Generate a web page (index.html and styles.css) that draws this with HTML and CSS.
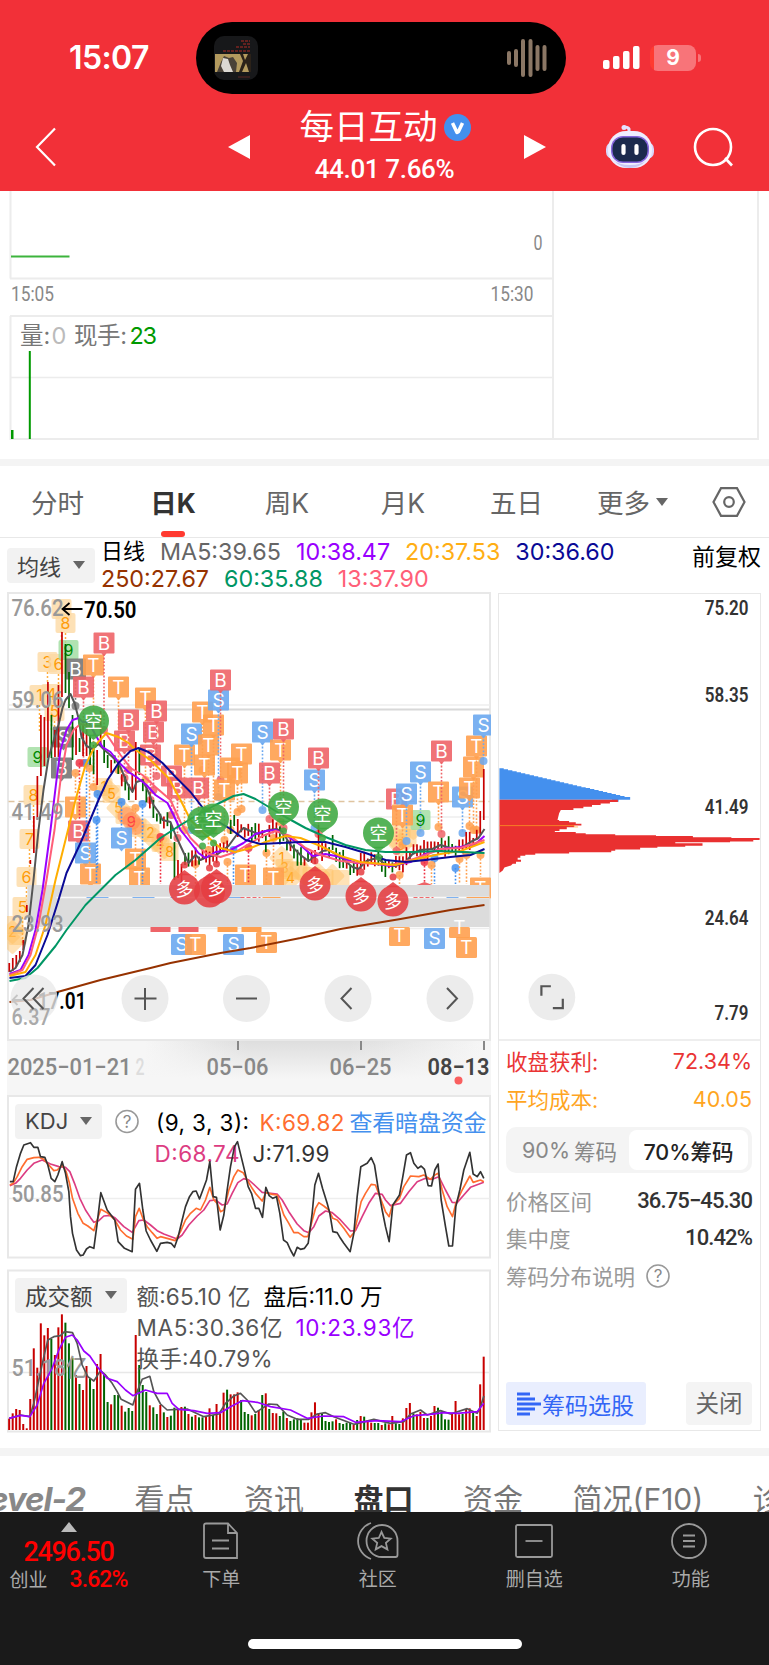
FILE: index.html
```html
<!DOCTYPE html>
<html lang="zh-CN">
<head>
<meta charset="utf-8">
<title>每日互动 44.01</title>
<link rel="stylesheet" href="styles.css">
</head>
<body>
<header class="top">
  <div class="status">
    <div class="clock">15:07</div>
    <div class="island">
      <svg class="art" width="44" height="44" viewBox="0 0 44 44"><rect width="44" height="44" rx="10" fill="#17181a"/><rect x="1" y="18" width="36" height="18" fill="#b39a5e"/><path d="M3 36l4-10 3-6 5 2 4-1 4 6-1 9z" fill="#4a4238"/><path d="M9 22l5 1 2 6 3 7h-9l-3-6z" fill="#ddd9d3"/><path d="M26 18l3 7-4 11h3l4-9 3 9h2V18h-3l-3 6-2-6z" fill="#2b2219"/><path d="M27 5h9M29 8h7M22 11h14M9 15h27" stroke="#7e2422" stroke-width="1.6" stroke-dasharray="3 1"/><path d="M24 41h12" stroke="#5a2422"/></svg>
      <svg class="wave" width="42" height="40" viewBox="0 0 42 40" stroke="#8b7765" stroke-width="4" stroke-linecap="round"><path d="M3 15v10M10 13v14M17 3v34M24.500 3v34M31.500 9v22M38.500 9v22"/></svg>
    </div>
    <svg class="signal" width="37" height="24" viewBox="0 0 37 24" fill="#fff"><rect y="14" width="6.500" height="9" rx="2"/><rect x="10" y="10" width="6.500" height="13" rx="2"/><rect x="20" y="5" width="6.500" height="18" rx="2"/><rect x="30" width="6.500" height="23" rx="2"/></svg>
    <div class="battery"><span>9</span></div>
  </div>
  <div class="nav">
    <svg width="22" height="40" viewBox="0 0 22 40" fill="none" stroke="#fff" stroke-width="2.200"><path d="M20 1.500L2 20l18 18.500"/></svg>
    <svg class="prev" width="22" height="24" viewBox="0 0 22 24"><path d="M22 0v24L0 12z" fill="#fff"/></svg>
    <div class="title">
      <div class="name">每日互动<svg width="27" height="27" viewBox="0 0 27 27"><circle cx="13.500" cy="13.500" r="13.500" fill="#4490ee"/><path d="M8.500 9l4.500 9.500 1.500-1L18.500 9" fill="none" stroke="#fff" stroke-width="3.500" stroke-linejoin="round"/></svg></div>
      <div class="quote">44.01 7.66%</div>
    </div>
    <svg class="next" width="22" height="24" viewBox="0 0 22 24"><path d="M0 0v24l22-12z" fill="#fff"/></svg>
    <svg class="robot" width="48" height="44" viewBox="0 0 48 44"><path d="M23 8V4q-1-2-5-2" fill="none" stroke="#e5e2ff" stroke-width="3"/><circle cx="18" cy="2.500" r="2.500" fill="#e5e2ff"/><rect x="0" y="17" width="48" height="17" rx="7" fill="#d9d7fb"/><rect x="2" y="6" width="44" height="37" rx="18" fill="#efedff"/><path d="M7 35q8 8 17 8t17-8q-6 5-17 5T7 35" fill="#c9c7f1"/><rect x="5" y="11" width="38" height="27" rx="12" fill="#8565dc"/><rect x="6.500" y="12.500" width="35" height="24" rx="10.500" fill="#1b2a4d"/><path d="M17.500 21v7M30.500 21v7" stroke="#fff" stroke-width="4.200" stroke-linecap="round"/></svg>
    <svg class="search" width="42" height="42" viewBox="0 0 42 42" fill="none" stroke="#fff" stroke-width="2.600"><circle cx="20" cy="20" r="18"/><path d="M32 31l7 7.500"/></svg>
  </div>
</header>

<section class="after-hours">
  <svg width="769" height="268" viewBox="0 191 769 268">
    <g stroke="#ececec" stroke-width="2" fill="none"><path d="M10.500 191v87.500M553 191v248M758 191v248M10 278.500h543M10.500 316v123H759M10 316h543"/><path d="M11 377.500h542" stroke-width="1.500"/></g>
    <g fill="#090"><rect x="11" y="255.500" width="58.500" height="2" fill="#3cb43c"/><rect x="28.800" y="351" width="2" height="88"/><rect x="11" y="430" width="2.500" height="9"/></g>
    <g class="din" fill="#888" font-size="20"><text x="533.500" y="250" textLength="9">0</text><text x="11" y="300.500" textLength="43">15:05</text><text x="490.500" y="300.500" textLength="43">15:30</text></g>
    <g class="sf" font-size="23.500" fill="#777"><text x="20" y="343.500">量:</text><text x="51.500" y="343.500" fill="#bbb">0</text><text x="74" y="343.500" textLength="53">现手:</text><text x="129.500" y="343.500" fill="#090" textLength="27.500">23</text></g>
  </svg>
</section>

<nav class="periods">
  <span>分时</span><span class="on">日K</span><span>周K</span><span>月K</span><span>五日</span><span>更多<i class="tri"></i></span>
  <svg width="34" height="30" viewBox="0 0 34 30" fill="none" stroke="#666" stroke-width="2.200"><path d="M9 1.200h16L32.500 15 25 28.800H9L1.500 15z"/><circle cx="17" cy="15" r="4.800"/></svg>
</nav>

<section class="legend">
  <div class="btn">均线<i class="tri"></i></div>
  <div class="rows">
    <div><b>日线</b><span class="c5">MA5:39.65</span><span class="c10">10:38.47</span><span class="c20">20:37.53</span><span class="c30">30:36.60</span></div>
    <div><span class="c250">250:27.67</span><span class="c60">60:35.88</span><span class="c13">13:37.90</span></div>
  </div>
  <div class="adj">前复权</div>
</section>

<main class="board">
  <div class="charts">
    <div class="kline">
      <svg id="kline" width="484" height="450" viewBox="6.500 592 484 450">
        <rect x="7.500" y="593" width="482" height="447" fill="#fff" stroke="#e8e8e8" stroke-width="2"/>
        <g stroke="#eee" stroke-width="1.500"><path d="M8 705h481M8 817h481M8 928.500h481"/></g>
        <path d="M8 709.500h481" stroke="#d8d8d8" stroke-width="2"/>
        <path d="M8 801.500h481" stroke="#dfc49f" stroke-width="1.500" stroke-dasharray="6 4"/>
        <g id="glow"></g>
        <g id="marks"></g>
        <rect x="27" y="885" width="462" height="42" fill="#dcdcdc"/>
        <path d="M56 897.500h433" stroke="#fafafa" stroke-width="1.600"/>
        <path d="M86 897.500h22M132 897.500h22M170 897.500h3M228 897.500h14M446 897.500h12" stroke="#7fb2f0" stroke-width="1.200"/>
        <path d="M240 897.500h20M413 897.500h20" stroke="#f06a6c" stroke-width="1.200" stroke-dasharray="4 2"/>
        <path d="M262 897.500h18M466 897.500h23" stroke="#ffa557" stroke-width="1.200"/>
        <g id="low"></g>
        <g id="candles"></g>
        <g id="averages"></g>
        <g id="flags"></g>
        <g class="din axis"><text x="11" y="615.500" textLength="52">76.62</text><text x="11" y="708" textLength="52">59.06</text><text x="11" y="820" textLength="52">41.49</text><text x="11" y="932" textLength="52">23.93</text></g>
        <path d="M82 609H62m7-6l-7 6 7 6" fill="none" stroke="#000" stroke-width="1.800"/>
        <text class="din peak" x="83.500" y="617.500" textLength="52.500">70.50</text>
        <path d="M28 1000H12m5-5l-5 5 5 5" fill="none" stroke="#333" stroke-width="1.800"/>
        <text class="din peak" x="37" y="1008.500" textLength="49">17.01</text>
        <g><circle cx="33.500" cy="998" r="23.500" fill="#eaeaea" fill-opacity=".8"/><circle cx="144.500" cy="998.500" r="23.500" fill="#ececec"/><circle cx="246" cy="998.500" r="23.500" fill="#ececec"/><circle cx="347.500" cy="998.500" r="23.500" fill="#ececec"/><circle cx="449.500" cy="998.500" r="23.500" fill="#ececec"/></g>
        <text class="din axis faint" x="11" y="1024.500" textLength="39">6.37</text>
        <g fill="none" stroke="#555" stroke-width="2"><path d="M33 988l-10 10.500 10 10.500M43 988l-10 10.500 10 10.500M134 998.500h22M144.500 988v22M235.500 998.500h21M351 988l-10 10.500 10 10.500M446.500 988l10 10.500-10 10.500"/></g>
      </svg>
    </div>
    <div class="dates">
      <svg width="484" height="54" viewBox="6.500 1042 484 54">
        <defs><linearGradient id="fade" x1="0" x2="1"><stop offset="0" stop-color="#dedede" stop-opacity="0"/><stop offset=".3" stop-color="#dedede"/><stop offset=".6" stop-color="#dedede"/><stop offset="1" stop-color="#dedede" stop-opacity="0"/></linearGradient><linearGradient id="down" x1="0" x2="0" y1="0" y2="1"><stop offset="0" stop-color="#f6f6f6" stop-opacity="0"/><stop offset=".7" stop-color="#f6f6f6"/></linearGradient></defs>
        <rect x="145" y="1042" width="340" height="54" fill="url(#fade)"/><rect x="145" y="1042" width="346" height="54" fill="url(#down)"/>
        <path d="M237.500 1042v9M360.500 1042v9M483.500 1042v9" stroke="#888" stroke-width="2"/>
        <g class="din date"><text x="7" y="1076" textLength="124">2025−01−21</text><text x="135" y="1076" textLength="9" class="ghost">2</text><text x="206" y="1076" textLength="62">05−06</text><text x="329" y="1076" textLength="62">06−25</text><text class="now" x="427" y="1076" textLength="62">08−13</text></g>
        <circle cx="458" cy="1081.500" r="4" fill="#f95f5f"/>
      </svg>
    </div>
    <div class="panel">
      <svg id="kdj" width="484" height="164" viewBox="6.500 1095 484 164"><rect x="7.500" y="1096" width="482" height="161.500" fill="#fff" stroke="#e8e8e8" stroke-width="2"/><path d="M8 1198.500h481" stroke="#eee" stroke-width="1.500"/><text class="din axis" x="11" y="1202" textLength="52">50.85</text>
        <g class="sf" font-size="22.500"><text x="155.500" y="1131" fill="#000" textLength="93">(9, 3, 3):</text><text x="259" y="1131" fill="#ff6d2f" textLength="85">K:69.82</text><text x="349" y="1131" fill="#4490ee" font-size="23" textLength="137">查看暗盘资金</text><text x="154" y="1162" fill="#dc3c82" textLength="85">D:68.74</text><text x="252" y="1162" fill="#333" textLength="77">J:71.99</text></g>
        <circle cx="126.500" cy="1121.500" r="11" fill="none" stroke="#999" stroke-width="1.600"/><text class="sf" x="126.500" y="1128" text-anchor="middle" font-size="17" fill="#888">?</text>
        <g id="kdj-lines" transform="translate(0 1030) scale(.33333)"></g></svg>
      <div class="btn pick">KDJ<i class="tri"></i></div>
    </div>
    <div class="panel">
      <svg id="vol" width="484" height="164" viewBox="6.500 1269 484 164"><rect x="7.500" y="1270.500" width="482" height="161" fill="#fff" stroke="#e8e8e8" stroke-width="2"/><path d="M8 1372.500h481" stroke="#e8e8e8" stroke-width="1.500"/>
        <g id="bars" transform="translate(0 1260) scale(.33333)"></g>
        <text class="din axis" x="11" y="1376" textLength="76">51.18亿</text>
        <g class="sf" font-size="22.500" fill="#555"><text x="136" y="1304.500" textLength="114">额:65.10 亿</text><text x="263" y="1304.500" fill="#000" textLength="119">盘后:11.0 万</text><text x="136" y="1336" textLength="146">MA5:30.36亿</text><text x="295" y="1336" fill="#90f" textLength="119">10:23.93亿</text><text x="136" y="1367" textLength="136">换手:40.79%</text></g>
        <g id="vol-lines" transform="translate(0 1260) scale(.33333)"></g></svg>
      <div class="btn pick wide">成交额<i class="tri"></i></div>
    </div>
  </div>

  <aside class="chips">
    <svg width="261" height="448" viewBox="498.500 593 261 448">
      <g class="din price"><text x="704.500" y="615" textLength="44">75.20</text><text x="704.500" y="702" textLength="44">58.35</text><text x="704.500" y="814.500" textLength="44">41.49</text><text x="704.500" y="926.500" textLength="44">24.64</text><text x="714.500" y="1021.500" textLength="34">7.79</text></g>
      <g transform="translate(490 591) scale(.33333)"><path d="M25 534h13v3h13v3h13v3h13v3h13v3h13v3h13v3h13v3h13v3h13v3h13v3h13v3h13v3h13v3h13v3h13v3h13v3h13v3h13v3h13v3h13v3h13v3h13v3h13v3h13v3h13v3h13v3h13v3h13v3h17v8h-35v6h-20v-6H25z" fill="#4490ee"/><path d="M25 629h357v7h-24v4h-28v5h-26v5h-26v5h-30v5h-38l-5 10-5 20h5v3h30v4h20v4h17v6h-22v5h-22v6h-22v5h-14v3h63v4h30v3h89v3h123v2h111v4h116v2h85v6h-19v5h-70v2H555v3h82v8h-52v3h-84v3h-52v5h-75v4h-12v4H235v4H133v4H103v3H88v6h-8v6h10v6H75v6H65l-5 5-20 6-5 9-10 8z" fill="#e93030"/><path d="M25 707h225v4h12" stroke="#ffa51f" stroke-width="2.500" fill="none" stroke-opacity=".8"/></g>
      <circle cx="551" cy="999" r="23.500" fill="#ececec"/><path d="M540.500 997.500v-9.500H550M562 1000.500v9.500h-10" fill="none" stroke="#555" stroke-width="2.200"/>
    </svg>
    <div class="info">
      <div class="row red"><span>收盘获利:</span><span class="num">72.34%</span></div>
      <div class="row gold"><span>平均成本:</span><span class="num">40.05</span></div>
      <div class="seg"><span>90%<em>筹码</em></span><span class="on">70%筹码</span></div>
      <div class="row grey"><span>价格区间</span><b>36.75−45.30</b></div>
      <div class="row grey"><span>集中度</span><b>10.42%</b></div>
      <div class="row grey"><span class="help">筹码分布说明<svg width="24" height="24" viewBox="0 0 24 24"><circle cx="12" cy="12" r="11" fill="none" stroke="#999" stroke-width="1.600"/><text class="sf" x="12" y="18" text-anchor="middle" font-size="17" fill="#888">?</text></svg></span></div>
      <div class="actions">
        <div class="choose"><svg width="24" height="24" viewBox="0 0 24 24" fill="none" stroke="#3366f6" stroke-width="2.800"><path d="M0 2h13M0 7h18M0 12h24M0 17h18M0 22h13"/></svg>筹码选股</div>
        <div class="close">关闭</div>
      </div>
    </div>
  </aside>
</main>

<nav class="sections"><span class="lv">Level-2</span><span>看点</span><span>资讯</span><span class="on">盘口</span><span>资金</span><span>简况(F10)</span><span>诊股</span></nav>

<footer class="bar">
  <div class="index"><i class="up"></i><b>2496.50</b><div><span>创业</span><em>3.62%</em></div></div>
  <div class="item"><svg width="40" height="38" viewBox="0 0 40 38"><path d="M5 1.500h22l9 9.500V36H5q-2 0-2-2V3.500q0-2 2-2zM27 1.500V11h9M11 18.500h17M11 26.500h17"/></svg>下单</div>
  <div class="item"><svg width="42" height="38" viewBox="0 0 42 38"><path d="M25 3a15.500 16 0 1 0 0 32h13.500q2 0 2-2V19A15.500 16 0 0 0 25 3zM14 1a19 19 0 0 0 0 36"/><path d="M24.500 10l2.800 6 6.400.6-4.800 4.300 1.500 6.500-5.900-3.300-5.800 3.300 1.500-6.500-4.900-4.300 6.500-.6z"/></svg>社区</div>
  <div class="item"><svg width="40" height="38" viewBox="0 0 40 38"><rect x="2" y="3" width="36" height="32" rx="1.500"/><path d="M11.500 19h17"/></svg>删自选</div>
  <div class="item"><svg width="40" height="38" viewBox="0 0 40 38"><circle cx="18" cy="19" r="17"/><path d="M12 13.500h12M12 19h12M12 24.500h12"/></svg>功能</div>
  <div class="home"></div>
</footer>
<script src="charts.js"></script>
</body>
</html>
```
FILE: styles.css
```css
* { box-sizing: border-box; }
body { margin: 0; width: 769px; height: 1665px; overflow: hidden; background: #fff; font-family: Inter, "Noto Sans CJK SC", sans-serif; color: #666; }
svg { display: block; flex: none; }
i, em { font-style: normal; }
.din { font-family: Roboto, "Noto Sans CJK SC", sans-serif; }
.sf { font-family: Inter, "Noto Sans CJK SC", sans-serif; }

.top { height: 191px; background: #f23038; color: #fff; }
.status { height: 94px; padding-top: 22px; display: flex; align-items: center; }
.clock { width: 196px; padding-left: 69px; font-size: 32px; font-weight: 600; line-height: 36px; letter-spacing: -.6px; }
.island { width: 370px; height: 72px; border-radius: 36px; background: #000; display: flex; align-items: center; justify-content: space-between; padding: 0 18px; }
.signal { margin-left: 37px; }
.battery { position: relative; margin-left: 10px; width: 46px; height: 26px; border-radius: 8px; background: linear-gradient(90deg, #ff3b30 4px, #f87479 4px); font-size: 21px; font-weight: 700; line-height: 26px; text-align: center; }
.battery::after { content: ""; position: absolute; right: -5px; top: 9px; width: 3px; height: 8px; border-radius: 0 3px 3px 0; background: #f87479; }
.nav { height: 97px; display: flex; align-items: center; padding-left: 35px; }
.nav > svg { margin-top: 9px; }
.nav .prev { margin-left: 171px; }
.title { width: 274px; display: flex; flex-direction: column; align-items: center; }
.name { display: flex; align-items: center; gap: 6px; font-size: 34.500px; line-height: 44px; margin-top: 4px; padding-right: 4px; }
.quote { font: 500 26px/30px Roboto, sans-serif; letter-spacing: -.35px; margin: 5px 5px 0 0; }
.nav .robot { margin-left: 60px; margin-top: 8px; }
.nav .search { margin-left: 39px; margin-top: 10px; }

.after-hours { height: 275px; border-bottom: 7px solid #f4f4f4; }
.tri { display: inline-block; border: 6px solid transparent; border-top: 8px solid #666; border-bottom: 0; }
.periods { height: 72px; border-bottom: 1.500px solid #e8e8e8; display: grid; grid-template-columns: 115px 116px 112px 120px 107px 125px 68px; align-items: center; justify-items: center; font-size: 26.500px; }
.periods span { position: relative; display: flex; align-items: center; gap: 6px; height: 71px; }
.periods .on { color: #333; font-weight: 700; }
.periods .on::after { content: ""; position: absolute; left: 50%; bottom: 0; width: 24px; height: 6px; margin-left: -12px; border-radius: 3px; background: #ff3a30; }

.legend { height: 54px; display: flex; padding: 0 8px 0 7px; }
.btn { display: flex; align-items: center; gap: 12px; height: 35px; padding: 0 10px 2px; border-radius: 4px; background: #f2f2f2; color: #444; font-size: 22px; }
.legend .btn { width: 88px; margin-top: 10px; }
.rows { margin-left: 6px; font-size: 23.300px; line-height: 27px; flex: 1; }
.rows > div { display: flex; gap: 15px; }
.rows b { font-weight: 400; color: #000; font-size: 22px; }
.c5 { color: #666; } .c10 { color: #90f; } .c20 { color: #ffae14; } .c30 { color: #0a0a96; } .c250 { color: #963200; } .c60 { color: #009664; } .c13 { color: #ff5f78; }
.adj { color: #000; font-size: 23px; line-height: 39px; }

.board { display: flex; height: 856px; padding-left: 6.500px; gap: 7.500px; }
.charts { width: 484px; }
.kline { height: 449px; }
.dates { height: 54px; background: #f6f6f6; }
.panel { position: relative; height: 174px; }
.pick { position: absolute; left: 8.500px; top: 9px; }
.pick.wide { font-size: 22.500px; }
.axis { font-size: 24px; fill: #999; font-weight: 500; }
.faint { fill: #aaa; }
.peak { font-size: 24px; fill: #000; font-weight: 600; }
.date { font-size: 24px; fill: #888; font-weight: 500; }
.date .now { fill: #444; font-weight: 600; }
.date .ghost { fill: #ddd; }
.price { font-size: 20px; font-weight: 600; fill: #333; }
.mk { font: 400 19px Inter, "Noto Sans CJK SC", sans-serif; text-anchor: middle; fill: #fff; }

.chips { width: 263px; height: 838px; margin-top: 1px; border: 1.500px solid #e8e8e8; }
.chips > svg { margin-top: -1px; border-bottom: 2px solid #eee; }
.info { padding: 1px 8px 0 7px; font-size: 21.500px; }
.row { display: flex; justify-content: space-between; align-items: center; height: 37.700px; }
.num { font-size: 21.500px; }
.red { color: #ea3434; } .gold { color: #ffa51f; } .grey { color: #999; }
.row b { font: 500 22px Roboto, sans-serif; letter-spacing: -.9px; color: #333; }
.seg { display: flex; height: 46px; margin: 10px 0 8px; padding: 3px 4px; border-radius: 10px; background: #f4f4f4; color: #888; }
.seg span { flex: 1; display: flex; gap: 4px; align-items: center; justify-content: center; }
.seg .on { background: #fff; border-radius: 8px; color: #222; font-weight: 500; }
.help { display: flex; align-items: center; gap: 11px; }
.actions { margin-top: 88px; display: flex; justify-content: space-between; height: 43px; font-size: 23.500px; }
.choose { width: 140px; display: flex; align-items: center; padding-left: 11px; gap: 1px; background: #e9eefe; color: #3366f6; border-radius: 3px; font-size: 23px; }
.close { width: 66px; text-align: center; line-height: 43px; background: #f4f4f4; border-radius: 4px; }

.sections { height: 64px; border-top: 8px solid #f4f4f4; display: flex; gap: 49.500px; font-size: 30px; line-height: 44px; padding-top: 21px; overflow: hidden; white-space: nowrap; color: #777; }
.sections span { flex: none; }
.sections .on { color: #333; font-weight: 700; }
.sections .lv { font-size: 33px; font-style: italic; font-weight: 700; letter-spacing: -1px; color: #888; margin-left: -37px; width: 122px; text-align: right; }

.bar { position: relative; height: 153px; background: #1a1a1a; display: grid; grid-template-columns: 143px repeat(4, 156.500px); color: #aaa; font-size: 19px; }
.item { display: flex; flex-direction: column; align-items: center; padding-top: 10px; line-height: 28px; gap: 6px; }
.item svg { fill: none; stroke: #999; stroke-width: 1.800; }
.index { display: flex; flex-direction: column; align-items: center; padding: 10px 6px 0 0; color: red; }
.up { border: 8.500px solid transparent; border-bottom: 10px solid #bbb; border-top: 0; }
.index b { font: 500 27px/32px Roboto, sans-serif; letter-spacing: -1.400px; margin-top: 4px; }
.index div { display: flex; gap: 22px; line-height: 26px; }
.index span { color: #aaa; }
.index em { font: 500 23px/26px Roboto, sans-serif; letter-spacing: -.9px; margin-top: -1px; }
.home { position: absolute; left: 248px; top: 127px; width: 274px; height: 10px; border-radius: 5px; background: #fff; }
```
FILE: charts.js
```js
const NS = 'http://www.w3.org/2000/svg';
const $ = id => document.getElementById(id);
function add(parent, tag, attrs, text) {
  const e = document.createElementNS(NS, tag);
  for (const k in attrs) e.setAttribute(k, attrs[k]);
  if (text !== undefined) e.textContent = text;
  parent.appendChild(e);
  return e;
}
// Numeric labels are condensed to their slot width
document.querySelectorAll('.din text, text.din').forEach(t => t.setAttribute('lengthAdjust', 'spacingAndGlyphs'));

const RED = '#c80000', GREEN = '#006400';
const ORANGE = '#ffa04f', COLORS = { B: '#ee6468', S: '#6ba8f0', T: ORANGE };

function line(parent, pts, color, width) {
  add(parent, 'polyline', { points: pts, fill: 'none', stroke: color, 'stroke-width': width, 'stroke-linejoin': 'round' });
}

const averages = [
  ['#555555', '9,972 15,968 22,955 28,925 33,880 38,830 43,790 48,758 53,741 58,725 62,708 65,700 70,694 74,703 78,718 81,737 86,746 92,749 98,744 104,750 112,757 118,763 122,772 126,782 132,792 136,782 142,780 148,792 153,805 158,812 162,820 170,822 175,835 180,846 188,863 195,855 200,860 206,857 216,855 228,846 236,835 243,828 250,831 258,834 268,830 276,829 282,832 290,845 300,855 308,861 315,856 322,851 328,850 333,853 340,857 352,867 358,869 366,861 376,858 386,865 395,866 405,862 412,854 420,850 432,849 440,845 450,848 460,848 470,842 478,838 484,829'],
  ['#9900ff', '9,974 20,970 28,955 35,930 42,890 50,830 56,780 60,750 66,730 72,720 78,718 82,722 88,722 95,735 102,747 110,752 118,762 128,772 136,777 146,785 155,795 167,803 173,815 180,830 188,840 198,853 205,858 215,852 230,850 243,843 255,834 265,831 275,830 285,835 300,845 312,856 325,854 340,857 355,863 370,863 390,866 410,862 425,854 440,849 460,847 475,844 484,836'],
  ['#ff5f78', '9,975 22,970 30,955 38,925 46,880 54,830 60,780 66,745 73,730 80,724 88,726 100,726 110,740 120,755 130,768 142,775 155,787 170,800 180,822 190,838 205,853 220,857 235,852 250,843 262,836 275,831 290,836 305,848 320,855 340,861 360,863 390,865 410,860 425,855 440,849 460,848 484,840'],
  ['#ffae00', '9,976 25,972 35,955 45,925 55,880 65,840 75,800 85,765 95,745 106,733 118,737 128,743 135,750 150,760 160,770 168,778 180,800 190,820 205,835 220,848 235,852 250,848 265,842 285,836 300,838 320,846 340,856 360,862 395,865 420,858 440,854 460,851 484,842'],
  ['#0a0a96', '9,978 25,976 35,965 47,935 58,900 66,873 80,843 98,800 107,780 118,763 130,751 138,748 148,752 162,763 175,777 190,792 204,810 215,820 230,829 245,840 260,844 280,843 300,842 325,842 345,847 365,853 385,860 405,862 425,860 450,857 470,855 484,849'],
  ['#009664', '9,981 25,978 37,968 55,946 66,930 85,905 100,890 115,875 135,860 160,838 180,825 197,815 215,805 233,796 243,794 255,799 270,808 285,817 305,828 325,837 345,845 365,850 385,852 410,852 440,851 484,853'],
  ['#963200', '9,1002 30,1000 57,992 100,980 150,968 170,963 220,953 250,948 300,938 340,929 400,919 450,910 484,905']
];
averages.forEach(([c, p]) => line($('averages'), p, c, 2));

// Candles: index -> [high y, low y, colour]
const fixed = {
  0: [963, 972, 1], 1: [958, 971, 1], 2: [955, 967, 1], 3: [951, 962, 1], 4: [940, 950, 1], 5: [905, 912, 1], 6: [860, 864, 1],
  7: [816, 853, 1], 8: [776, 820, 1], 9: [715, 776, 1], 10: [717, 766, 1], 11: [682, 758, 1], 12: [715, 758, 0], 13: [730, 757, 1],
  14: [685, 757, 1], 15: [632, 697, 1], 16: [644, 693, 0], 17: [672, 708, 0], 18: [715, 760, 0], 19: [727, 755, 1], 20: [738, 752, 0],
  21: [724, 756, 1], 22: [722, 756, 1], 23: [735, 765, 0], 24: [745, 774, 0], 25: [750, 785, 1], 26: [711, 746, 1], 27: [740, 763, 0],
  28: [755, 768, 0], 29: [760, 773, 1], 36: [742, 800, 1], 37: [748, 775, 0], 47: [842, 880, 0], 48: [860, 878, 1], 49: [864, 885, 1],
  63: [820, 834, 0], 64: [815, 826, 0], 73: [835, 852, 0], 88: [825, 850, 1], 92: [835, 850, 0], 134: [811, 835, 1], 135: [769, 820, 1]
};
const ma5 = averages[0][1].split(' ').map(p => p.split(',').map(Number));
function yAt(x) {
  for (let i = 1; i < ma5.length; i++) {
    const [x0, y0] = ma5[i - 1], [x1, y1] = ma5[i];
    if (x <= x1) return y0 + (y1 - y0) * (x - x0) / (x1 - x0);
  }
  return ma5[ma5.length - 1][1];
}
for (let i = 0; i < 136; i++) {
  const x = 8.7 + i * 3.515;
  let c = fixed[i];
  if (!c) {
    const slope = yAt(x + 4) - yAt(x - 4);
    const mid = yAt(x + 3) + ((i * 7) % 5 - 2) * 1.4, h = 4 + (i * 13) % 6;
    c = [mid - h, mid + h, slope < 0 || i % 4 === 0 ? 1 : 0];
  }
  add($('candles'), 'rect', { x: x - .8, y: c[0], width: 1.7, height: c[1] - c[0], fill: c[2] ? RED : GREEN });
}

function dot(g, x, y, color, r = 4) { add(g, 'circle', { cx: x, cy: y, r, fill: color, 'fill-opacity': .85 }); }
function mark(g, letter, x, y, stem, color) {
  color = color || COLORS[letter];
  if (stem) {
    add(g, 'path', { d: `M${x} ${y + 11}V${stem}`, stroke: color, 'stroke-width': 1.6, 'stroke-dasharray': '1.8 1.8' });
    dot(g, x, stem, color);
  }
  add(g, 'path', { d: `M${x - 9.5} ${y - 10.5}h19q1 0 1 1v19q0 1-1 1h-7l-2.500 3-2.500-3h-7q-1 0-1-1v-19q0-1 1-1z`, fill: color, 'fill-opacity': .9 });
  add(g, 'text', { x, y: y + 7, class: 'mk' }, letter);
}
function num(g, n, x, y, fill = '#fdd9a4', ink = '#ff9c0a') {
  add(g, 'rect', { x: x - 10, y: y - 10, width: 20, height: 20, rx: 2, fill, 'fill-opacity': .8 });
  if (n) add(g, 'text', { x, y: y + 6, class: 'mk', style: `fill:${ink};font-size:16px` }, n);
}
const glow = $('glow'), marks = $('marks');
[[14, 925, ''], [12, 932, '2'], [17, 936, ''], [12, 942, ''], [103, 787, '1'], [107, 790, ''], [111, 794, '5'], [118, 808, '5'], [124, 815, ''], [131, 821, ''], [137, 828, ''], [144, 830, ''], [150, 833, '2'], [155, 840, ''], [160, 843, '4'], [164, 847, ''], [169, 852, '8'],
 [281, 858, '1'], [284, 868, '3'], [281, 876, ''], [290, 870, ''], [290, 878, '4'], [298, 871, ''], [304, 874, ''], [311, 876, ''], [318, 875, ''], [324, 878, ''], [332, 876, ''], [340, 879, ''], [395, 838, ''], [401, 832, ''], [400, 845, '3'], [407, 838, ''], [413, 828, '']
].forEach(([x, y, n], i) => {
  add(glow, 'rect', { x: x - 9, y: y - 9, width: 18, height: 18, rx: 2, fill: '#ffbf60', 'fill-opacity': .45, transform: i % 2 ? `rotate(45 ${x} ${y})` : '' });
  if (n) add(glow, 'text', { x, y: y + 5, class: 'mk', style: 'fill:#ff9c0a;font-size:14px' }, n);
});
[['', 61, 609], ['8', 65, 623], ['3', 47, 662], ['6', 58, 664], ['1', 39, 695], ['4', 51, 694], ['5', 54, 711], ['8', 33, 795], ['7', 29, 839], ['6', 26, 877], ['5', 22, 907]].forEach(([n, x, y]) => {
  add(glow, 'path', { d: `M${x} ${y + 10}v26`, stroke: '#ffae40', 'stroke-width': 1.5, 'stroke-dasharray': '2 2' });
  num(marks, n, x, y);
});
num(marks, '9', 68, 650, '#9ddc9d', '#008a00');
num(marks, '9', 37, 757, '#9ddc9d', '#008a00');
num(marks, '9', 420, 820, '#9ddc9d', '#008a00');
[[131, 821], [126, 816], [135, 826]].forEach(([x, y]) => add(glow, 'circle', { cx: x, cy: y, r: 9, fill: '#ff8450', 'fill-opacity': .5 }));
add(marks, 'text', { x: 131, y: 827, class: 'mk', style: 'fill:#f44;font-size:15px' }, '9');
const GREY = '#777';
[
  ['B', 75, 669, 706, GREY], ['S', 63, 737, 0, GREY], ['B', 61, 768, 0, GREY],
  ['T', 93, 665, 787], ['B', 103.5, 643, 730], ['B', 83, 687, 763], ['T', 118, 687, 770], ['T', 145, 698, 780],
  ['B', 124, 741, 778], ['B', 128, 720, 770], ['B', 150, 755, 800], ['B', 153, 732, 790], ['B', 156, 711, 776],
  ['T', 184, 755, 830], ['S', 191, 734, 830], ['T', 202, 712, 770], ['T', 204, 765, 820], ['T', 208, 745, 850], ['T', 213, 725, 830],
  ['S', 218, 700, 797], ['B', 220, 680, 780], ['B', 171, 776, 815], ['B', 177, 788, 838], ['B', 198, 788, 830],
  ['T', 230, 768, 830], ['T', 241, 754, 809], ['T', 237, 773, 812], ['T', 224, 790, 840],
  ['T', 75, 807, 0], ['B', 78, 831, 0], ['S', 85, 853, 0], ['T', 90, 874, 0], ['S', 121, 838, 0], ['T', 135, 859, 0], ['T', 139, 878, 0],
  ['S', 262, 732, 810], ['T', 280, 750, 822], ['B', 283, 729, 828], ['B', 269, 773, 819], ['S', 314, 780, 828], ['B', 318, 758, 834],
  ['B', 396, 799, 851], ['T', 402, 815, 845], ['S', 406, 794, 841], ['S', 420, 772, 833], ['T', 438, 792, 827], ['B', 441, 751, 834],
  ['S', 462, 797, 833], ['T', 469, 788, 826], ['T', 473, 767, 830], ['T', 476, 746, 830], ['S', 483, 725, 761],
  ['T', 245, 875, 0], ['T', 273, 878, 0], ['T', 480, 888, 0]
].forEach(m => mark(marks, ...m));
[[75, 773, 794, ORANGE], [86, 763, 842, '#4490ee'], [97, 794, 870, '#4490ee'], [89, 768, 865, ORANGE], [79, 763, 820, '#e34'], [96, 820, 884, '#4490ee'], [121, 802, 828, '#4490ee'],
 [142, 804, 884, '#4490ee'], [135, 808, 850, ORANGE], [160, 837, 884, '#e34'], [233, 850, 884, '#4490ee'], [227, 862, 884, ORANGE], [248, 848, 884, '#e34'], [266, 853, 884, ORANGE], [273, 838, 868, ORANGE],
 [399, 875, 884, ORANGE], [424, 862, 884, '#e34'], [434, 858, 884, '#4490ee'], [431, 865, 884, ORANGE], [455, 868, 884, '#4490ee'], [459, 859, 884, ORANGE], [466, 855, 884, ORANGE], [480, 855, 877, ORANGE], [195, 864, 884, ORANGE]
].forEach(([x, a, b, c]) => {
  add(marks, 'path', { d: `M${x} ${a}V${b}`, stroke: c, 'stroke-width': 1.6, 'stroke-dasharray': '1.8 1.8' });
  dot(marks, x, a, c);
});
add(marks, 'path', { d: 'M416 885l8-3 8 3z', fill: COLORS.B });

const low = $('low');
[['B', 160], ['B', 188], ['T', 227], ['T', 251]].forEach(([l, x]) =>
  add(low, 'rect', { x: x - 10, y: 927, width: 20, height: 5, fill: COLORS[l] }));
[['S', 181, 944], ['T', 195, 944], ['S', 233, 944], ['T', 266, 942], ['T', 399, 935], ['S', 434, 938], ['T', 459, 927], ['T', 466, 947]].forEach(([l, x, y]) => {
  add(low, 'rect', { x: x - 10.5, y: Math.max(927, y - 10), width: 21, height: y + 11 - Math.max(927, y - 10), rx: 1.5, fill: COLORS[l], 'fill-opacity': .9 });
  add(low, 'text', { x, y: y + 7, class: 'mk' }, l);
});

function flag(t, x, y, up) {
  const c = up ? '#e53c41' : '#3ea841', s = up ? -1 : 1, f = $('flags');
  add(f, 'circle', { cx: x, cy: y, r: 15.5, fill: c, 'fill-opacity': .88 });
  add(f, 'path', { d: `M${x - 7} ${y + s * 13.8}L${x} ${y + s * 19}L${x + 7} ${y + s * 13.8}z`, fill: c, 'fill-opacity': .88 });
  dot(f, x, y + s * 24, c, 3.5);
  if (t) add(f, 'text', { x, y: y + 6.5, class: 'mk', style: 'font-size:18px' }, t);
}
[['空', 93, 721], ['空', 202, 822], ['空', 213, 819], ['空', 283, 807], ['空', 322, 814], ['空', 378, 833]].forEach(a => flag(...a, false));
[['多', 184, 889], ['', 209, 892], ['多', 216, 888], ['多', 314.5, 885], ['多', 360.5, 896], ['多', 392.5, 901]].forEach(a => flag(...a, true));

// KDJ
const k = $('kdj-lines');
line(k, '28,467 45,460 60,445 80,420 100,400 125,390 150,402 175,410 195,412 208,425 222,460 238,505 255,540 270,563 280,577 295,572 310,558 330,556 345,565 370,590 395,607 405,590 415,572 430,570 450,585 470,602 490,612 530,627 545,615 565,585 590,558 610,540 628,512 645,510 665,525 680,522 695,490 712,458 730,446 745,450 765,468 785,487 830,492 845,510 865,545 890,582 910,602 925,608 940,590 955,558 975,543 995,548 1020,570 1050,603 1065,602 1085,560 1105,520 1125,490 1145,493 1155,510 1170,527 1200,520 1225,485 1250,455 1275,445 1295,448 1315,440 1335,480 1355,517 1370,518 1390,495 1410,472 1450,457', '#dc3c82', 5);
line(k, '28,465 38,460 50,440 65,410 80,388 100,383 115,382 130,388 145,405 160,422 170,420 185,405 197,425 207,460 216,505 232,550 248,580 262,588 280,602 290,570 301,538 320,548 343,570 360,600 378,618 397,628 405,560 416,535 427,565 440,590 455,608 470,625 480,620 500,625 524,632 540,605 555,570 570,550 587,535 600,540 615,510 628,472 640,510 650,520 660,545 670,540 685,480 700,440 712,420 728,428 740,450 755,475 765,490 785,513 796,488 815,493 830,495 840,525 850,555 865,580 880,608 893,608 910,620 922,620 933,580 945,535 955,518 970,528 985,540 997,565 1010,570 1030,595 1049,622 1062,605 1072,560 1082,515 1095,490 1112,463 1125,465 1138,500 1155,545 1166,560 1175,527 1197,505 1210,470 1230,438 1255,440 1270,435 1290,448 1303,435 1313,430 1325,480 1340,530 1356,560 1366,520 1385,480 1408,438 1418,457 1440,450 1450,455', '#ff6d2f', 5);
line(k, '28,455 38,455 48,410 60,370 70,345 90,338 100,352 112,352 120,380 133,382 142,405 152,445 163,455 172,435 185,395 195,430 205,485 210,560 216,610 228,660 240,677 248,675 258,657 268,650 280,655 290,580 301,488 320,540 343,570 353,635 372,655 395,665 405,478 417,460 427,540 437,603 450,630 469,664 480,640 500,637 512,640 522,652 533,620 545,570 555,530 567,500 577,485 587,483 597,507 607,480 618,450 628,395 638,500 648,502 659,600 670,555 680,480 690,410 702,350 711,335 722,380 733,425 743,470 753,490 765,535 775,535 786,562 796,472 806,497 817,505 828,500 838,550 849,630 860,638 870,660 880,678 890,652 900,658 912,655 923,640 935,550 943,465 954,430 966,475 980,520 988,550 997,605 1010,608 1020,625 1030,640 1049,665 1060,610 1070,500 1081,410 1100,400 1112,383 1122,405 1133,475 1145,540 1155,590 1166,635 1177,525 1197,495 1207,440 1218,375 1230,368 1240,400 1252,415 1262,408 1272,418 1283,467 1293,468 1303,420 1313,402 1322,510 1335,590 1345,648 1356,648 1366,530 1378,480 1390,420 1408,367 1418,432 1430,440 1440,425 1450,445', '#333', 5);

// Turnover bars: top y followed by r (up) or g (down)
const bars = '476r 460r 447r 450r 492r 505r 417r 265r 323r 190r 226r 204r 237g 285r 202r 163r 188g 250g 293g 345r 372g 390r 318r 355g 387g 312r 282r 345g 426g 433r 405g 405g 437r 455g 444g 453g 225r 315g 375g 396g 436r 442g 462g 435r 457g 471r 467g 443g 447r 441r 440g 462r 470g 465r 472g 472g 470r 445r 465g 432r 460r 398r 389g 403r 403r 397r 420g 456g 462g 466r 462g 450r 405g 400r 447g 459r 460r 468g 455g 474r 483g 478g 475g 480g 488r 488r 457r 427r 460r 462g 483g 486g 484g 478r 489g 492g 488g 488g 495r 480g 468r 470g 480r 488r 489g 489g 495r 490g 493r 468r 490g 492g 475r 444r 429r 460g 463r 456r 474r 474g 468r 438r 443g 455g 478g 479g 462r 423r 463r 462g 447r 445r 458g 468r 373r 290r'.split(' ');
bars.forEach((b, i) => {
  const y = parseInt(b);
  add($('bars'), 'rect', { x: 23 + i * 10.545, y, width: 6, height: 510 - y, fill: b.endsWith('r') ? RED : GREEN });
});
const v = $('vol-lines');
line(v, '26,475 60,465 88,470 100,430 115,360 130,290 142,240 160,230 180,227 192,215 216,218 230,250 245,315 262,350 280,363 300,332 315,345 335,370 350,395 362,418 397,435 410,395 425,358 448,349 460,395 480,432 500,450 530,448 560,447 610,470 655,462 675,430 700,408 720,400 740,420 765,458 785,445 805,432 830,434 860,465 890,478 925,478 950,462 975,458 1000,470 1060,493 1120,478 1170,490 1210,485 1230,462 1260,450 1280,465 1320,452 1350,462 1400,446 1430,460 1440,440 1450,408', '#555', 5);
line(v, '26,475 60,466 88,470 110,435 130,370 155,325 175,270 195,232 215,225 230,240 250,273 268,288 290,320 320,355 350,365 375,390 397,407 435,390 470,400 500,400 515,430 535,448 580,452 620,460 660,458 690,440 725,422 770,427 810,440 870,450 920,475 970,468 1030,470 1065,487 1130,482 1200,485 1240,467 1290,463 1330,458 1370,460 1430,455 1450,430', '#90f', 5);
```
